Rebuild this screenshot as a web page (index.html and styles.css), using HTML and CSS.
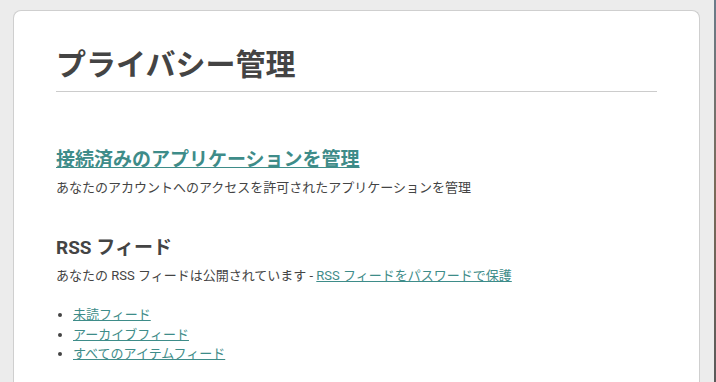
FILE: index.html
```html
<!DOCTYPE html>
<html lang="ja">
<head>
<meta charset="utf-8">
<link rel="stylesheet" href="styles.css">
</head>
<body>
<div class="page">
  <main class="card">
    <h1 class="title">プライバシー管理</h1>
    <section class="section">
      <h2 class="section-link"><a href="#">接続済みのアプリケーションを管理</a></h2>
      <p class="desc">あなたのアカウントへのアクセスを許可されたアプリケーションを管理</p>
    </section>
    <section class="section rss">
      <h3 class="section-title">RSS フィード</h3>
      <p class="desc">あなたの RSS フィードは公開されています - <a href="#">RSS フィードをパスワードで保護</a></p>
      <ul class="feeds">
        <li><a href="#">未読フィード</a></li>
        <li><a href="#">アーカイブフィード</a></li>
        <li><a href="#">すべてのアイテムフィード</a></li>
      </ul>
    </section>
  </main>
  <div class="edge"></div>
</div>
</body>
</html>
```
FILE: styles.css
```css
html, body {
  margin: 0;
  padding: 0;
  background: #ececec;
  height: 100%;
  overflow: hidden;
}
body {
  font-family: Roboto, "Noto Sans CJK JP", "Noto Sans", sans-serif;
  color: #444;
}
.page {
  display: flex;
  height: 100%;
}
.card {
  margin: 10px 0 0 13px;
  width: 687px;
  background: #fff;
  border: 1px solid #cfcfcf;
  border-bottom: none;
  border-radius: 8px 8px 0 0;
  padding: 30px 42px 0 42px;
  box-sizing: border-box;
}
.edge {
  margin-left: auto;
  width: 2px;
  background: linear-gradient(#6a7c8a, #7a6a58 50%, #5a5a5a);
}
.title {
  margin: 0;
  font-size: 30px;
  font-weight: bold;
  line-height: 48px;
  padding-bottom: 2px;
  border-bottom: 1px solid #cccccc;
  color: #444;
}
.section-link {
  margin: 54px 0 0 0;
  font-size: 19px;
  line-height: 28px;
  font-weight: bold;
}
a {
  color: #3e8c89;
  text-decoration: underline;
}
.desc {
  margin: 4px 0 0 0;
  font-size: 13px;
  line-height: 20px;
}
.section-title {
  margin: 37px 0 0 0;
  font-size: 19px;
  line-height: 26px;
  font-weight: bold;
}
.rss .desc {
  margin-top: 5px;
}
.feeds {
  margin: 19px 0 0 0;
  padding-left: 17px;
  font-size: 13px;
  line-height: 19.5px;
}
```
